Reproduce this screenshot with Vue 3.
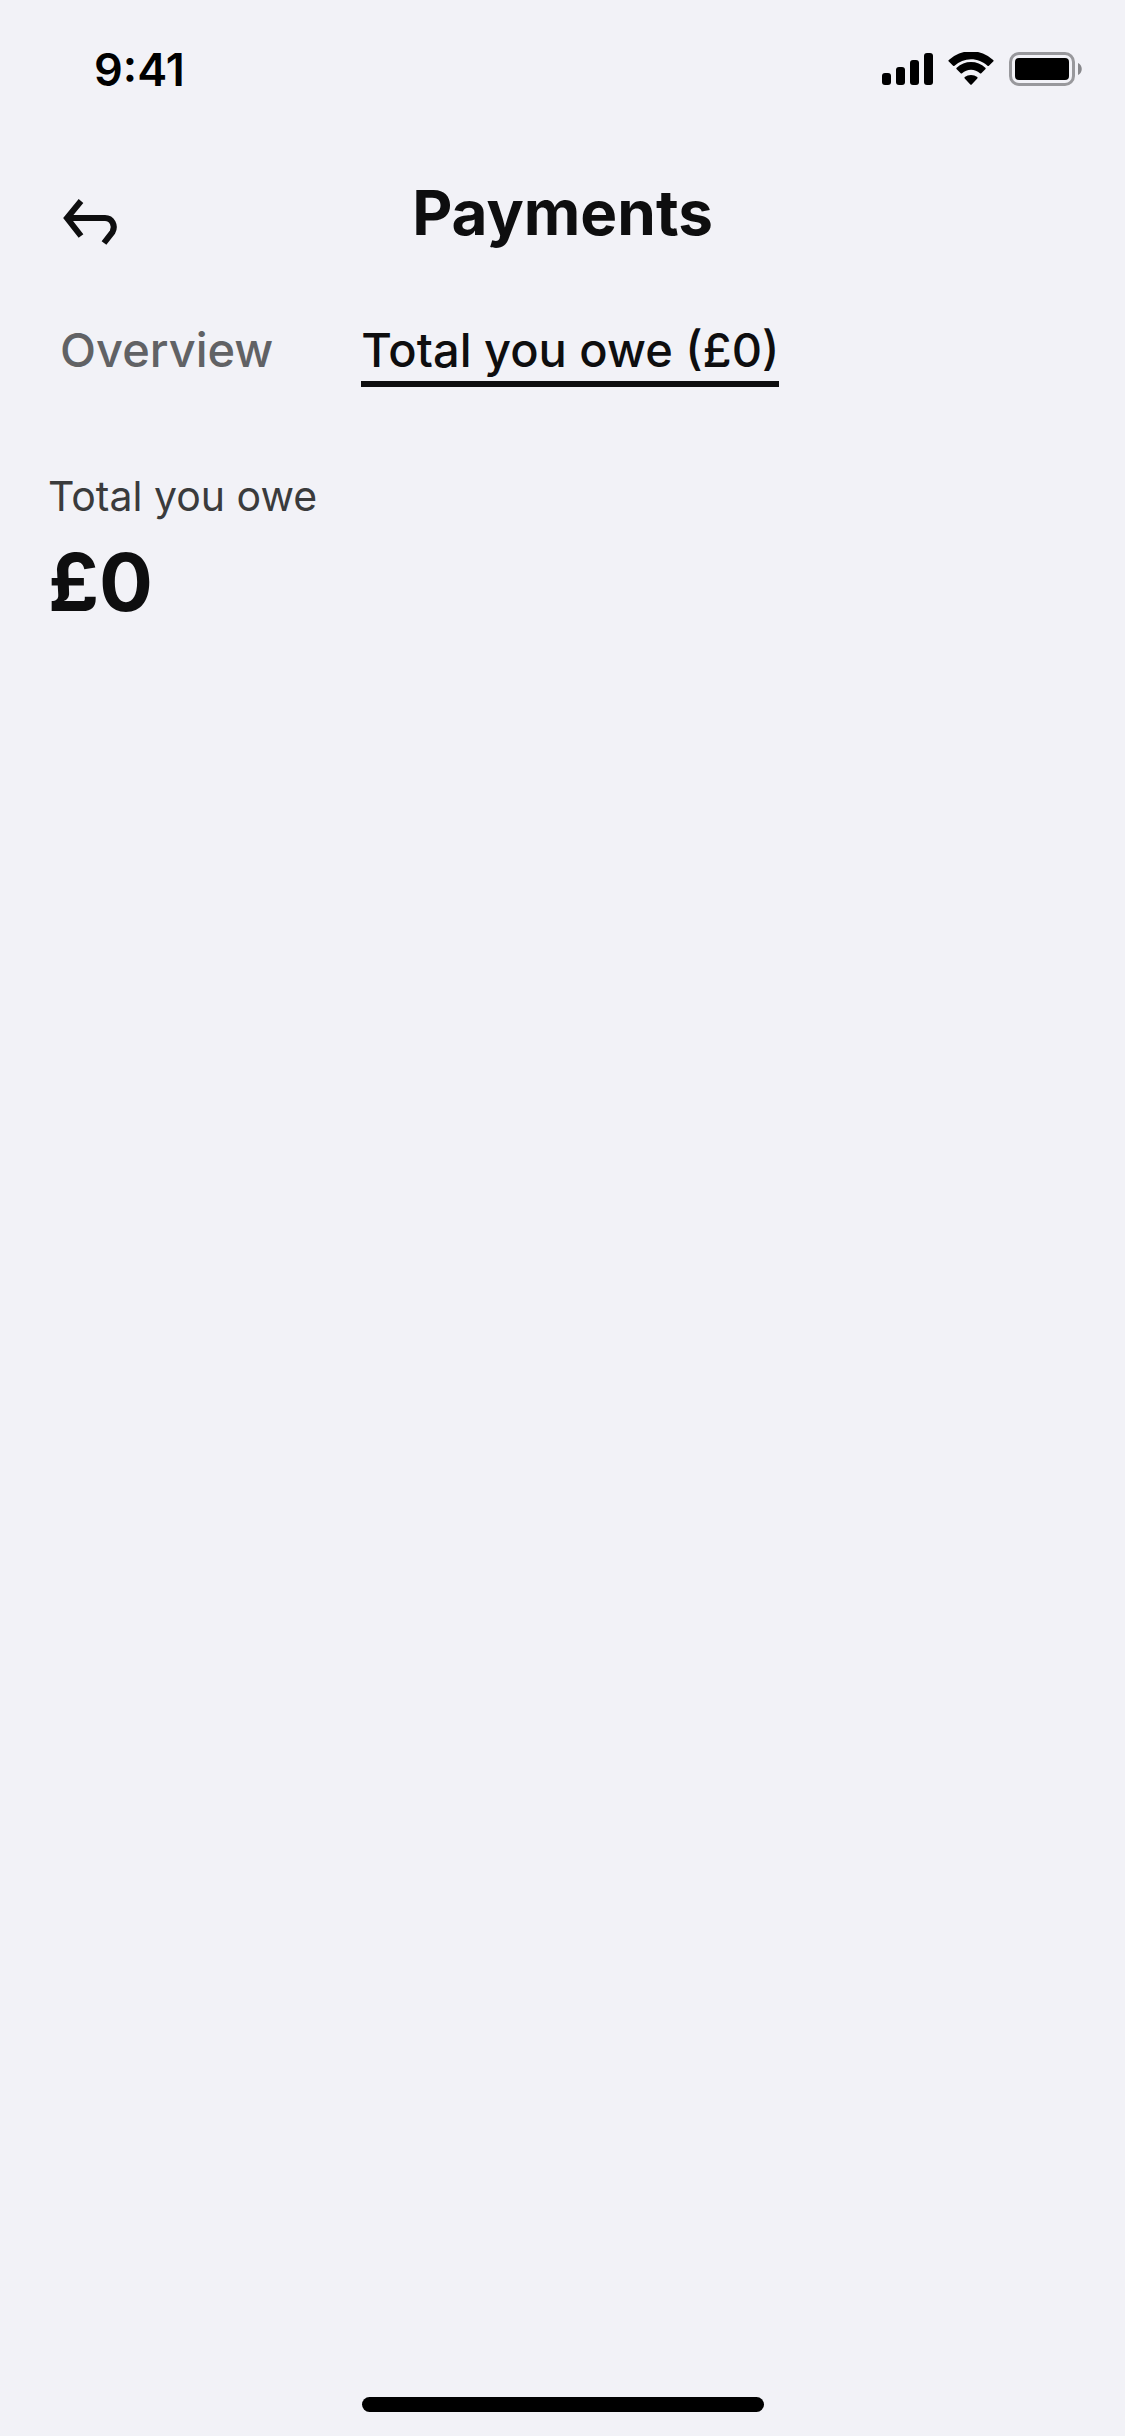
<script setup>
const tabs = [
  { label: 'Overview', active: false },
  { label: 'Total you owe (£0)', active: true },
]
</script>

<template>
  <div class="screen">
    <div class="status">
      <span class="time">9:41</span>
      <div class="indicators">
        <svg width="52" height="34" viewBox="0 0 52 34" aria-hidden="true">
          <rect x="1" y="21" width="9" height="12" rx="3" />
          <rect x="15" y="15" width="9" height="18" rx="3" />
          <rect x="29" y="8" width="9" height="25" rx="3" />
          <rect x="43" y="1" width="9" height="32" rx="3" />
        </svg>
        <svg width="46" height="34" viewBox="0 0 46 34" aria-hidden="true">
          <path d="M23 7.200c6.200 0 12 2.400 16.500 6.600.4.400 1 .4 1.400 0l4.300-4.200c.5-.5.5-1.200 0-1.600a32.500 32.500 0 0 0-44.400 0c-.5.400-.5 1.100 0 1.600l4.300 4.200c.4.400 1 .4 1.400 0A24.500 24.500 0 0 1 23 7.200z" />
          <path d="M23 17.800c3.300 0 6.500 1.300 8.900 3.500.4.400 1 .4 1.400 0l4-4c.5-.5.5-1.200 0-1.600a21 21 0 0 0-28.600 0c-.5.400-.5 1.100 0 1.600l4 4c.4.400 1 .4 1.400 0A13.200 13.200 0 0 1 23 17.800z" />
          <path d="M29.300 25.100c.4.400.4 1 0 1.400l-5.600 6c-.4.400-1 .4-1.400 0l-5.600-6c-.4-.4-.4-1 0-1.400a10.200 10.200 0 0 1 12.600 0z" />
        </svg>
        <svg width="74" height="34" viewBox="0 0 74 34" aria-hidden="true">
          <rect x="1.500" y="1.500" width="63" height="31" rx="8.500" fill="none" stroke="#98989c" stroke-width="3" />
          <rect x="6" y="6" width="54" height="22" rx="4" />
          <path d="M69 11c5 2 5 10 0 12z" fill="#88888c" />
        </svg>
      </div>
    </div>
    <header class="header">
      <button class="back" type="button" aria-label="Back">
        <svg width="60" height="57" viewBox="0 0 60 57" fill="none" stroke="#0e0e0f" stroke-width="6" aria-hidden="true">
          <path d="M21 5 7 22l14 18M7 22h38c7 0 11 8 7.500 14L44 47" />
        </svg>
      </button>
      <h1>Payments</h1>
    </header>
    <nav class="tabs">
      <a v-for="tab in tabs" :key="tab.label" href="#" :class="{ active: tab.active }">{{ tab.label }}</a>
    </nav>
    <main>
      <p class="label">Total you owe</p>
      <p class="amount">£0</p>
    </main>
    <div class="home"></div>
  </div>
</template>

<style>
body { margin: 0; background: #f2f2f7; }
</style>

<style scoped>
.screen {
  display: flex;
  flex-direction: column;
  box-sizing: border-box;
  min-height: 100vh;
  background: #f2f2f7;
  color: #0e0e0f;
  font-family: Inter, "Liberation Sans", sans-serif;
}
.status {
  display: flex;
  justify-content: space-between;
  align-items: center;
  height: 138px;
  padding: 0 42px 0 94px;
}
.time { color: #000; font-size: 45px; font-weight: 600; }
.indicators { display: flex; gap: 15px; }
.header {
  display: grid;
  grid-template-columns: 1fr auto 1fr;
  align-items: end;
  padding: 35px 60px 0;
}
.back { display: flex; justify-self: start; padding: 0; border: 0; background: none; }
h1 { margin: 0; font-size: 62px; line-height: 80px; font-weight: 700; }
.tabs { display: flex; gap: 88px; padding: 66px 60px 0; }
.tabs a {
  color: #616265;
  font-size: 47px;
  line-height: 62px;
  font-weight: 500;
  text-decoration: none;
  border-bottom: 6px solid transparent;
}
.tabs a.active { color: #0e0e0f; border-color: #0e0e0f; }
main { flex: 1; padding: 81px 48px 0; }
p { margin: 0; }
.label { color: #3a3b3c; font-size: 41px; line-height: 56px; }
.amount { margin-top: 10px; font-size: 80px; line-height: 96px; font-weight: 700; }
.home {
  align-self: center;
  width: 402px;
  height: 15px;
  margin-bottom: 24px;
  border-radius: 8px;
  background: #000;
}
</style>
